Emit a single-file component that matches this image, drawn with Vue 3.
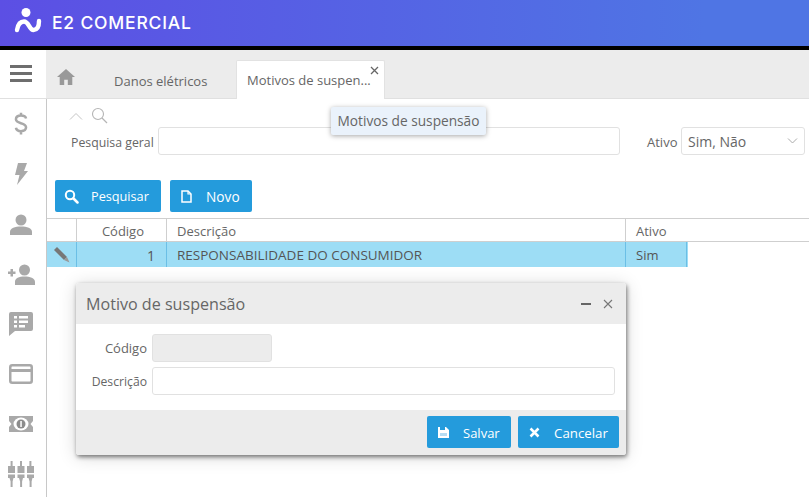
<script setup>
const rows = [{ code: 1, desc: 'RESPONSABILIDADE DO CONSUMIDOR', active: 'Sim' }]
</script>

<template>
  <div class="app">
    <header class="brand">
      <svg class="logo" width="30" height="34" viewBox="14 6 30 34">
        <circle cx="26" cy="12.500" r="4.500" fill="#fff" />
        <path d="M17 30C18 24 20.500 21.500 24 21.500c5 0 5 8.500 9.500 8.500 3.500 0 5.500-3.500 5.500-9" fill="none" stroke="#fff" stroke-width="4.400" stroke-linecap="round" />
      </svg>
      <span class="brand-name">E2 COMERCIAL</span>
    </header>
    <div class="body">
      <aside class="side">
        <div class="burger"><span></span><span></span><span></span></div>
        <nav class="side-list">
          <div class="side-item">
            <svg width="16" height="24" viewBox="3 2 19 27"><path d="M18.500 9C18 6.500 16 5.500 12.500 5.500 9 5.500 6.500 7 6.500 10c0 6 12 3 12 9.500 0 3-2.500 4.500-6 4.500-3.500 0-5.500-1-6-4M12.500 2v4M12.500 24v4" fill="none" stroke="#a9a9a9" stroke-width="3" /></svg>
          </div>
          <div class="side-item">
            <svg width="14" height="24" viewBox="0 0 14 24"><path d="M4 1h9l-3 8h4L3 23l2.500-10H1z" fill="#a9a9a9" /></svg>
          </div>
          <div class="side-item">
            <svg width="22" height="21" viewBox="0 0 22 21"><circle cx="11" cy="6" r="5.500" fill="#a9a9a9" /><path d="M0 21v-3c0-4 5-5.500 11-5.500S22 14 22 18v3z" fill="#a9a9a9" /></svg>
          </div>
          <div class="side-item">
            <svg width="27" height="21" viewBox="0 0 27 21"><circle cx="16.500" cy="6" r="5.500" fill="#a9a9a9" /><path d="M7 21v-3c0-4 4-5.500 9.500-5.500S27 14 27 18v3zM0 7.500h7.500V10H0zM2.500 5h2.500v7.500H2.500z" fill="#a9a9a9" /></svg>
          </div>
          <div class="side-item">
            <svg width="24" height="24" viewBox="0 0 24 24"><path d="M2 0h20a2 2 0 0 1 2 2v15a2 2 0 0 1-2 2H6l-6 5V2a2 2 0 0 1 2-2z" fill="#a9a9a9" /><path d="M5 4h3v2.500H5zm5 0h9v2.500h-9zM5 8.500h3V11H5zm5 0h9V11h-9zM5 13h3v2.500H5zm5 0h6v2.500h-6z" fill="#fff" /></svg>
          </div>
          <div class="side-item">
            <svg width="24" height="20" viewBox="0 0 24 20"><rect x="1.250" y="1.250" width="21.500" height="17.500" rx="2" fill="none" stroke="#a9a9a9" stroke-width="2.500" /><rect x="1" y="5" width="22" height="3" fill="#a9a9a9" /></svg>
          </div>
          <div class="side-item">
            <svg width="24" height="16" viewBox="0 0 24 16"><rect width="24" height="16" fill="#a9a9a9" /><ellipse cx="12" cy="8" rx="7.500" ry="6.500" fill="#fff" /><circle cx="12" cy="8" r="4.500" fill="#8c8c8c" /><path d="M11.300 5h1.500v6h-1.500z" fill="#fff" /><path d="M0 5l2.500 3L0 11zM24 5l-2.500 3 2.500 3z" fill="#fff" /></svg>
          </div>
          <div class="side-item">
            <svg width="26" height="26" viewBox="0 0 26 26"><g fill="#a9a9a9"><path d="M2.600 0h2v5h-2zM0 5h7v7H0zM0 13.500h7v3.500H0zM1.500 17h4l-.9 3.500V26h-2v-5.500z" /><path d="M12 0h2v5h-2zM9.500 5h7v7h-7zM9.500 13.500h7v3.500h-7zM11 17h4l-.9 3.500V26h-2v-5.500z" /><path d="M21.400 0h2v5h-2zM19 5h7v7h-7zM19 13.500h7v3.500h-7zM20.500 17h4l-.9 3.500V26h-2v-5.500z" /></g></svg>
          </div>
        </nav>
      </aside>
      <main class="main">
        <div class="tabs">
          <svg class="home" width="20" height="18" viewBox="0 0 22 20"><path d="M11 1 1 10h3v9h5v-6h4v6h5v-9h3z" fill="#999" /></svg>
          <div class="tab">Danos elétricos</div>
          <div class="tab active">
            <span>Motivos de suspen...</span>
            <svg class="tab-x" width="9" height="9" viewBox="0 0 9 9"><path d="M1 1l7 7M8 1 1 8" stroke="#666" stroke-width="1.300" /></svg>
          </div>
        </div>
        <div class="tip">Motivos de suspensão</div>

        <section class="filter">
          <div class="filter-icons">
            <svg width="14" height="8" viewBox="0 0 14 8"><path d="M1 7.500 7 1.500l6 6" fill="none" stroke="#c4c4c4" stroke-width="1" /></svg>
            <svg width="17" height="17" viewBox="0 0 17 17"><circle cx="7" cy="7" r="5.500" fill="none" stroke="#b5b5b5" stroke-width="1.100" /><path d="m11 11 5 5" stroke="#b5b5b5" stroke-width="1.300" /></svg>
          </div>
          <div class="filter-row">
            <label class="lbl-geral">Pesquisa geral</label>
            <div class="input grow"></div>
            <label class="lbl-ativo">Ativo</label>
            <div class="input select">
              <span>Sim, Não</span>
              <svg width="11" height="6" viewBox="0 0 11 6"><path d="m1 .5 4.500 4.500L10 .5" fill="none" stroke="#aaa" /></svg>
            </div>
          </div>
        </section>

        <div class="actions">
          <button class="btn w-pesq">
            <svg width="15" height="15" viewBox="0 0 15 15"><circle cx="6" cy="6" r="4.200" fill="none" stroke="#fff" stroke-width="2" /><path d="m9.500 9.500 4 4" stroke="#fff" stroke-width="2.500" stroke-linecap="round" /></svg>
            <span class="pesq">Pesquisar</span>
          </button>
          <button class="btn w-novo">
            <svg width="11" height="13" viewBox="0 0 11 13"><path d="M1 1h6l3 3v8H1z" fill="none" stroke="#fff" stroke-width="1.500" /><path d="M7 1v3h3" fill="none" stroke="#fff" stroke-width="1.200" /></svg>
            <span class="novo">Novo</span>
          </button>
        </div>

        <div class="grid-head">
          <div class="c0"></div>
          <div class="c1">Código</div>
          <div class="c2">Descrição</div>
          <div class="c3">Ativo</div>
        </div>
        <div v-for="r in rows" :key="r.code" class="grid-row">
          <div class="c0">
            <svg width="17" height="17" viewBox="0 0 17 17"><path d="M1 4 4 1l10 10-3 3z" fill="#777" /><path d="M11 14l3-3 2.500 5.500z" fill="#999" /></svg>
          </div>
          <div class="c1">{{ r.code }}</div>
          <div class="c2 upper">{{ r.desc }}</div>
          <div class="c3">{{ r.active }}</div>
        </div>

        <div class="dialog">
          <div class="dlg-head">
            <span class="dlg-title">Motivo de suspensão</span>
            <span class="dlg-ctrl">
              <i class="min"></i>
              <svg width="10" height="10" viewBox="0 0 10 10"><path d="m1 1 8 8M9 1 1 9" stroke="#777" stroke-width="1.100" /></svg>
            </span>
          </div>
          <div class="dlg-body">
            <div class="dlg-row">
              <label>Código</label>
              <div class="input code"></div>
            </div>
            <div class="dlg-row">
              <label class="narrow">Descrição</label>
              <div class="input grow"></div>
            </div>
          </div>
          <div class="dlg-foot">
            <button class="btn w-salvar">
              <svg width="13" height="13" viewBox="0 0 13 13"><path d="M1 1h8l3 3v8H1z" fill="#fff" /><path d="M3 1h5v3H3z" fill="#249bdc" /><rect x="3" y="7" width="7" height="3" fill="#b5dcf3" /></svg>
              <span class="salvar">Salvar</span>
            </button>
            <button class="btn w-cancelar">
              <svg width="11" height="11" viewBox="0 0 11 11"><path d="m1.500 1.500 8 8M9.500 1.500l-8 8" stroke="#fff" stroke-width="2.500" /></svg>
              <span class="cancelar">Cancelar</span>
            </button>
          </div>
        </div>
      </main>
    </div>
  </div>
</template>

<style>
html, body { margin: 0; background: #fff; overflow: hidden; }
</style>

<style scoped>
.app {
  width: 809px;
  height: 497px;
  display: flex;
  flex-direction: column;
  overflow: hidden;
  font-family: "Open Sans", "Noto Sans", sans-serif;
  font-size: 13px;
  color: #666;
}
.brand {
  height: 46px;
  flex: none;
  display: flex;
  align-items: center;
  padding-left: 14px;
  background: linear-gradient(90deg, #5c4fe4 0%, #4f75e4 87%);
  border-bottom: 4px solid #000;
  gap: 8px;
}
.brand-name {
  color: #fff;
  font-family: "Inter", sans-serif;
  font-size: 17.500px;
  font-weight: 500;
  letter-spacing: 0.800px;
  margin-top: -2px;
}
.body { flex: 1; display: flex; min-height: 0; }
.side {
  width: 47px;
  flex: none;
  display: flex;
  flex-direction: column;
}
.burger {
  height: 49px;
  box-sizing: border-box;
  width: 46px;
  border-bottom: 1px solid #e0e0e0;
  display: flex;
  flex-direction: column;
  align-items: center;
  justify-content: center;
  gap: 4px;
  padding: 0 4px 2px 0;
  flex: none;
}
.burger span { width: 22px; height: 3px; background: #6e6e6e; }
.side-list {
  flex: 1;
  display: flex;
  flex-direction: column;
  border-right: 1px solid #c8c8c8;
  box-sizing: border-box;
}
.side-item {
  height: 50px;
  flex: none;
  padding-right: 4px;
  display: flex;
  align-items: center;
  justify-content: center;
}
.main { flex: 1; position: relative; min-width: 0; }
.tabs {
  height: 49px;
  box-sizing: border-box;
  background: #ececec;
  border-bottom: 1px solid #e0e0e0;
  margin-left: -1px;
  padding-left: 1px;
  display: flex;
  align-items: flex-end;
}
.home { align-self: flex-start; margin: 18px 0 0 9px; }
.tab {
  margin-left: 28px;
  width: 132px;
  height: 38px;
  line-height: 42px;
  padding: 0 10px;
  font-size: 13px;
  box-sizing: border-box;
  white-space: nowrap;
}
.tab.active {
  position: relative;
  width: 149px;
  height: 39px;
  margin-left: 0;
  margin-bottom: -1px;
  background: #fff;
  border: 1px solid #e2e2e2;
  border-bottom: 0;
  border-radius: 2px 2px 0 0;
  line-height: 39px;
}
.tab-x { position: absolute; right: 5px; top: 5px; }
.tip {
  position: absolute;
  left: 284px;
  top: 57px;
  width: 155px;
  height: 28px;
  box-sizing: border-box;
  text-align: center;
  line-height: 28px;
  font-size: 13.700px;
  white-space: nowrap;
  background: #eaf2fb;
  border-radius: 2px;
  box-shadow: 0 1px 5px rgba(0, 0, 0, 0.35);
  z-index: 3;
}
.filter { padding: 8px 4px 0 0; height: 73px; box-sizing: border-box; }
.filter-icons {
  display: flex;
  align-items: center;
  gap: 9px;
  margin-left: 22px;
  height: 17px;
}
.filter-icons svg:last-child { margin-left: -1px; }
.filter-row {
  display: flex;
  align-items: center;
  margin-top: 3px;
}
.lbl-geral { margin-left: 24px; width: 87px; font-size: 12.300px; white-space: nowrap; padding-top: 2px; }
.input {
  height: 28px;
  box-sizing: border-box;
  background: #fff;
  border: 1px solid #e1e1e1;
  border-radius: 3px;
}
.grow { flex: 1; }
.lbl-ativo { margin-left: 27px; width: 34px; padding-top: 2px; }
.select {
  width: 124px;
  display: flex;
  align-items: center;
  justify-content: space-between;
  padding: 0 6px;
  font-size: 14px;
}
.actions {
  display: flex;
  gap: 9px;
  padding: 8px 0 0 8px;
  height: 38px;
}
.btn {
  height: 32px;
  border: 0;
  border-radius: 2px;
  background: #249bdc;
  color: #fff;
  display: flex;
  align-items: center;
  padding: 0 0 0 9px;
  font: inherit;
  font-size: 13px;
}
.w-pesq { width: 106px; }
.w-novo { width: 82px; padding-left: 11px; }
.w-salvar { width: 84px; padding-left: 10px; }
.w-cancelar { width: 101px; padding-left: 11px; }
.pesq { margin-left: 12px; font-size: 12.700px; }
.novo { margin-left: 14px; font-size: 13.700px; }
.salvar { margin-left: 13px; padding-top: 2px; }
.cancelar { margin-left: 14px; font-size: 13.300px; padding-top: 2px; }
.grid-head, .grid-row { display: flex; }
.grid-head {
  height: 24px;
  box-sizing: border-box;
  border-top: 1px solid #cfcfcf;
  border-bottom: 1px solid #cfcfcf;
  line-height: 25px;
}
.grid-row { height: 25px; width: 641px; background: #9dddf5; line-height: 27px; color: #555; }
.c0 { width: 29px; box-sizing: border-box; display: flex; align-items: center; justify-content: center; }
.c1 { width: 90px; box-sizing: border-box; text-align: right; padding-right: 11px; border-left: 1px solid #cfcfcf; }
.grid-head .c1 { padding-right: 22px; }
.c2 { width: 459px; box-sizing: border-box; padding-left: 10px; border-left: 1px solid #cfcfcf; }
.upper { font-size: 13.500px; }
.c3 { width: 62px; box-sizing: border-box; padding-left: 10px; border-left: 1px solid #cfcfcf; }
.grid-row .c1 { font-size: 14px; }
.grid-row .c1, .grid-row .c2, .grid-row .c3 { border-left-color: #6bbfe6; }
.grid-row .c3 { border-right: 1px solid #6bbfe6; }
.dialog {
  position: absolute;
  left: 29px;
  top: 233px;
  width: 550px;
  height: 172px;
  border-radius: 3px;
  background: #fff;
  overflow: hidden;
  box-shadow: 1px 2px 4px rgba(0, 0, 0, 0.5), 0 2px 18px rgba(0, 0, 0, 0.16);
  display: flex;
  flex-direction: column;
  z-index: 2;
}
.dlg-head {
  height: 41px;
  flex: none;
  background: #ececec;
  display: flex;
  align-items: center;
  justify-content: space-between;
  padding: 0 13px 0 10px;
}
.dlg-title { font-size: 16.100px; color: #666; }
.dlg-ctrl { display: flex; align-items: center; gap: 12px; }
.min { display: block; width: 10px; height: 2px; background: #666; }
.dlg-body { flex: 1; padding: 10px 11px 0 0; }
.dlg-row { display: flex; align-items: center; margin-bottom: 5px; }
.dlg-row label { width: 71px; text-align: right; margin-right: 5px; font-size: 13px; }
.dlg-row .narrow { font-size: 12.200px; }
.code { width: 120px; flex: none; background: #ececec; }
.dlg-foot {
  height: 45px;
  flex: none;
  box-sizing: border-box;
  background: #ececec;
  display: flex;
  align-items: flex-start;
  justify-content: flex-end;
  gap: 7px;
  padding: 6px 7px 0 0;
}
</style>
